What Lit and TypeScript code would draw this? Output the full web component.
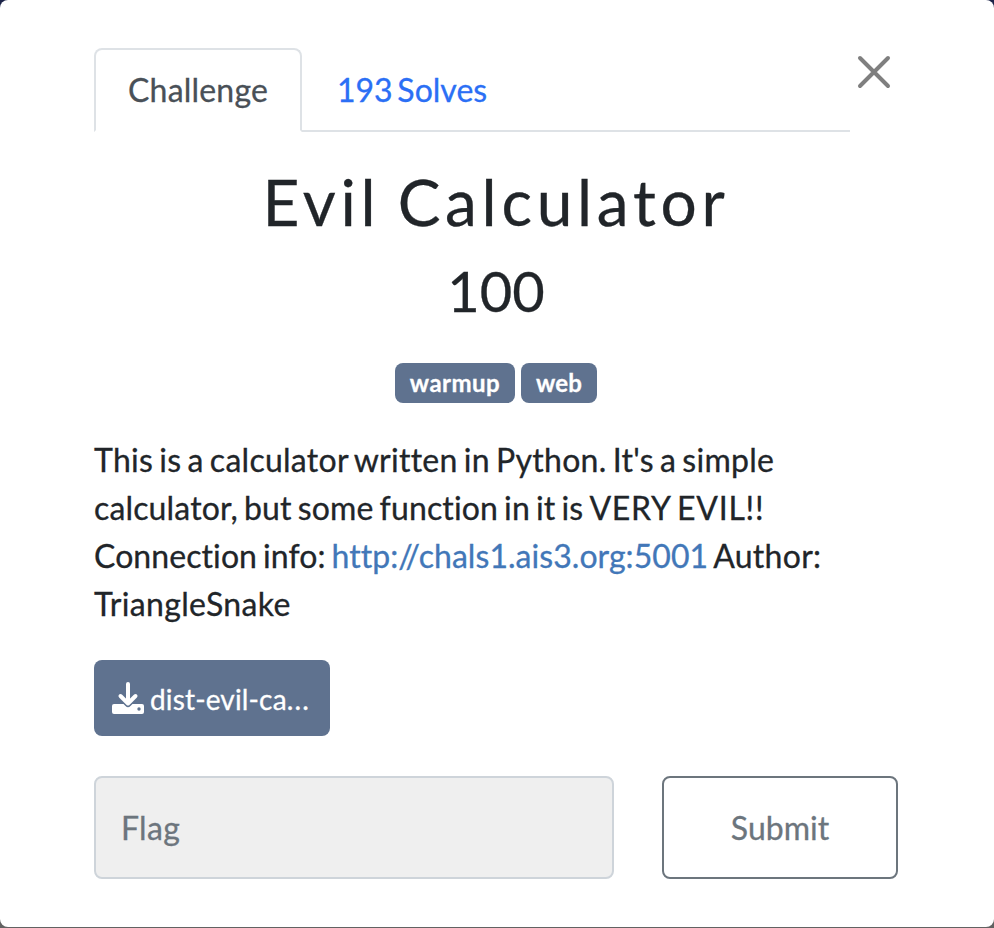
import { LitElement, html, css } from "lit";
import { customElement } from "lit/decorators.js";

@customElement("app-root")
export class AppRoot extends LitElement {
  static styles = css`
    :host { display: block; width: 994px; height: 928px; background: linear-gradient(#1b2348 50%, #626262 50%); font: 32px/48px Lato, sans-serif; color: #212529; overflow: hidden; font-variant-ligatures: none; -webkit-text-stroke: 0.3px currentColor; }
    * { box-sizing: border-box; }
    .modal { width: 994px; height: 927px; background: #fff; border-radius: 8px; padding: 48px 96px 0 94px; display: flex; flex-direction: column; }
    .head { display: flex; height: 84px; }
    .tabs { display: flex; width: 756px; border-bottom: 2px solid #dee2e6; height: 84px; }
    .tab { height: 84px; padding: 15px 32px; border: 2px solid transparent; line-height: 50px; white-space: nowrap; color: #2b6ff5; letter-spacing: 0.2px; word-spacing: -3.5px; }
    .tab:not(.active) { padding-left: 33px; letter-spacing: 0; }
    .active { width: 208px; border-color: #dee2e6; border-bottom-color: #fff; border-radius: 8px 8px 0 0; color: #495057; }
    .close { margin: 7px 0 0 7px; width: 34px; height: 34px; display: block; flex: none; }
    h2 { font-size: 64px; line-height: 77px; font-weight: 400; letter-spacing: 4.7px; word-spacing: -3.8px; margin: 31px 0 0; text-align: center; }
    h3 { font-size: 56px; line-height: 67px; font-weight: 400; margin: 17px 0 0; text-align: center; }
    .tags { display: flex; gap: 6px; justify-content: center; margin-top: 39px; }
    .tag { height: 40px; border-radius: 8px; background: #5f728f; color: #fff; font-size: 24px; font-weight: 700; line-height: 40px; padding: 0 15px; letter-spacing: 0.45px; }
    .tag + .tag { letter-spacing: 0.2px; }
    p { margin: 33px 0 0; white-space: nowrap; letter-spacing: 0.27px; word-spacing: -2.3px; }
    .narrow { letter-spacing: 0.15px; }
    .caps { letter-spacing: 0.75px; }
    .label { letter-spacing: 0.08px; }
    .link { color: #4277b8; letter-spacing: 0.05px; }
    .name { letter-spacing: 0.35px; }
    .file { margin-top: 32px; width: 236px; height: 76px; flex: none; border-radius: 8px; background: #5f728f; color: #fff; display: flex; align-items: center; gap: 6px; padding: 0 18px; font-size: 28px; letter-spacing: 0.15px; }
    .filename { padding-top: 1px; }
    .dots { letter-spacing: 1.2px; }
    .form { display: flex; gap: 48px; margin-top: 40px; height: 103px; }
    .input { width: 520px; background: #efefef; border: 2px solid #ced4da; border-radius: 8px; padding: 26px 25px; color: #6c757d; letter-spacing: 0.3px; }
    .submit { width: 236px; border: 2px solid #6c757d; border-radius: 8px; color: #6c757d; text-align: center; padding-top: 26px; }
  `;

  render() {
    return html`<div class="modal">
      <div class="head">
        <div class="tabs"><div class="tab active">Challenge</div><div class="tab">193 Solves</div></div>
        <svg class="close" viewBox="0 0 34 34" stroke="#7f7f7f" stroke-width="4" stroke-linecap="round"><path d="M3 3L31 31M31 3L3 31"/></svg>
      </div>
      <h2>Evil Calculator</h2>
      <h3>100</h3>
      <div class="tags"><span class="tag">warmup</span><span class="tag">web</span></div>
      <p>This is a calculator written in Python. It's a simple<br><span class="narrow">calculator, but some function in it is </span><span class="caps">VERY EVIL!!</span><br><span class="label">Connection info: </span><span class="link">http://chals1.ais3.org:5001</span> Author:<br><span class="name">TriangleSnake</span></p>
      <div class="file">
        <svg width="32" height="32" viewBox="0 0 32 32" fill="none">
          <rect y="22" width="32" height="10" rx="2" fill="#fff"/>
          <path d="M8.500 14L16 21.500L23.500 14" stroke="#5f728f" stroke-width="7" stroke-linejoin="round"/>
          <circle cx="27" cy="27" r="1.700" fill="#5f728f"/>
          <path d="M16 2V21M8.500 14L16 21.500L23.500 14" stroke="#fff" stroke-width="4" stroke-linecap="round" stroke-linejoin="round"/>
        </svg>
        <span class="filename">dist-evil-ca<span class="dots">...</span></span>
      </div>
      <div class="form"><div class="input">Flag</div><div class="submit">Submit</div></div>
    </div>`;
  }
}
